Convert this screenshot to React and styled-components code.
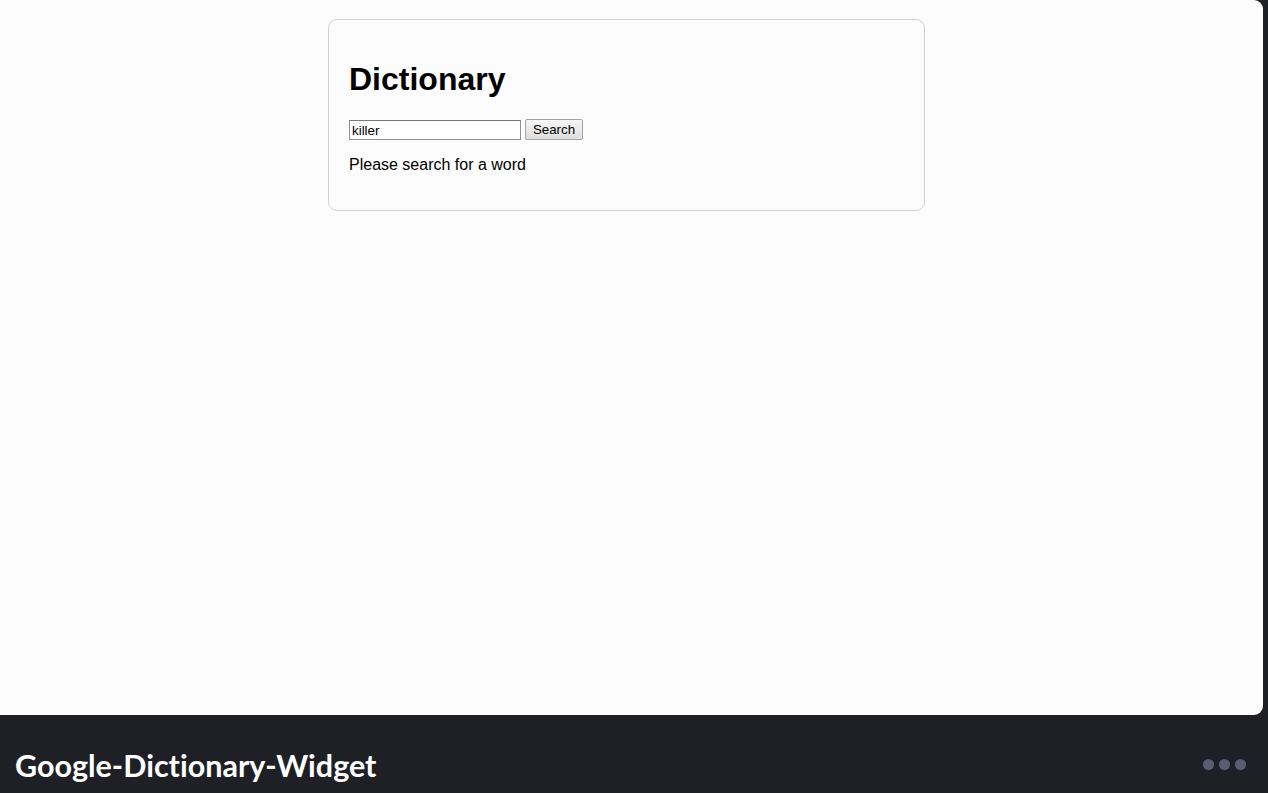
import React from "react";
import styled, { createGlobalStyle } from "styled-components";

const Global = createGlobalStyle`
  html, body { margin: 0; padding: 0; background: #1f2026; }
  #root { width: 1268px; height: 793px; overflow: hidden; }
`;

const Frame = styled.div`
  display: flex;
  flex-direction: column;
  width: 1268px;
  height: 793px;
  background: #1f2026;
`;

const Preview = styled.div`
  height: 715px;
  flex-shrink: 0;
  margin-right: 5px;
  background: #fcfcfc;
  border-radius: 0 9px 9px 0;
  padding: 19px 0 0 328px;
  box-sizing: border-box;
  font-family: "Liberation Sans", Arial, sans-serif;
  color: #000;
`;

const Card = styled.div`
  width: 597px;
  box-sizing: border-box;
  padding: 20px;
  border: 1px solid #d2d2d2;
  border-radius: 9px;
  background: #fcfcfc;
`;

const Title = styled.h1`
  font-size: 32px;
  font-weight: bold;
  margin: 21px 0 21px;
  line-height: 37px;
`;

const Form = styled.div`
  display: flex;
  align-items: center;
  gap: 4px;
  height: 21px;
`;

const Input = styled.input`
  box-sizing: border-box;
  width: 172px;
  height: 20px;
  margin-top: 1px;
  padding: 1px 2px;
  border: 1px solid #8f8f8f;
  border-top-color: #7a7a7a;
  background: #fff;
  font-family: "Liberation Sans", Arial, sans-serif;
  font-size: 13.33px;
  color: #000;
  outline: none;
`;

const Button = styled.button`
  box-sizing: border-box;
  height: 21px;
  width: 58px;
  padding: 0 6px;
  border: 1px solid #a3a3a3;
  border-radius: 2px;
  background: linear-gradient(#f6f6f6, #dedede);
  font-family: "Liberation Sans", Arial, sans-serif;
  font-size: 13.33px;
  color: #000;
`;

const Message = styled.p`
  margin: 16px 0;
  font-size: 16px;
  line-height: 18px;
`;

const Footer = styled.div`
  flex: 1;
  display: flex;
  align-items: center;
  justify-content: space-between;
  padding: 21px 22px 0 15px;
`;

const Name = styled.div`
  font-family: Lato, "Open Sans", sans-serif;
  font-weight: 700;
  font-size: 30.5px;
  font-variant-ligatures: none;
  font-feature-settings: "liga" 0, "clig" 0;
  color: #fff;
`;

const Dots = styled.div`
  display: flex;
  gap: 5px;
`;

const Dot = styled.span`
  width: 11px;
  height: 11px;
  border-radius: 50%;
  background: #5a5c73;
`;

export default function App() {
  return (
    <Frame>
      <Global />
      <Preview>
        <Card>
          <Title>Dictionary</Title>
          <Form>
            <Input defaultValue="killer" />
            <Button>Search</Button>
          </Form>
          <Message>Please search for a word</Message>
        </Card>
      </Preview>
      <Footer>
        <Name>Google-Dictionary-Widget</Name>
        <Dots>
          <Dot />
          <Dot />
          <Dot />
        </Dots>
      </Footer>
    </Frame>
  );
}
